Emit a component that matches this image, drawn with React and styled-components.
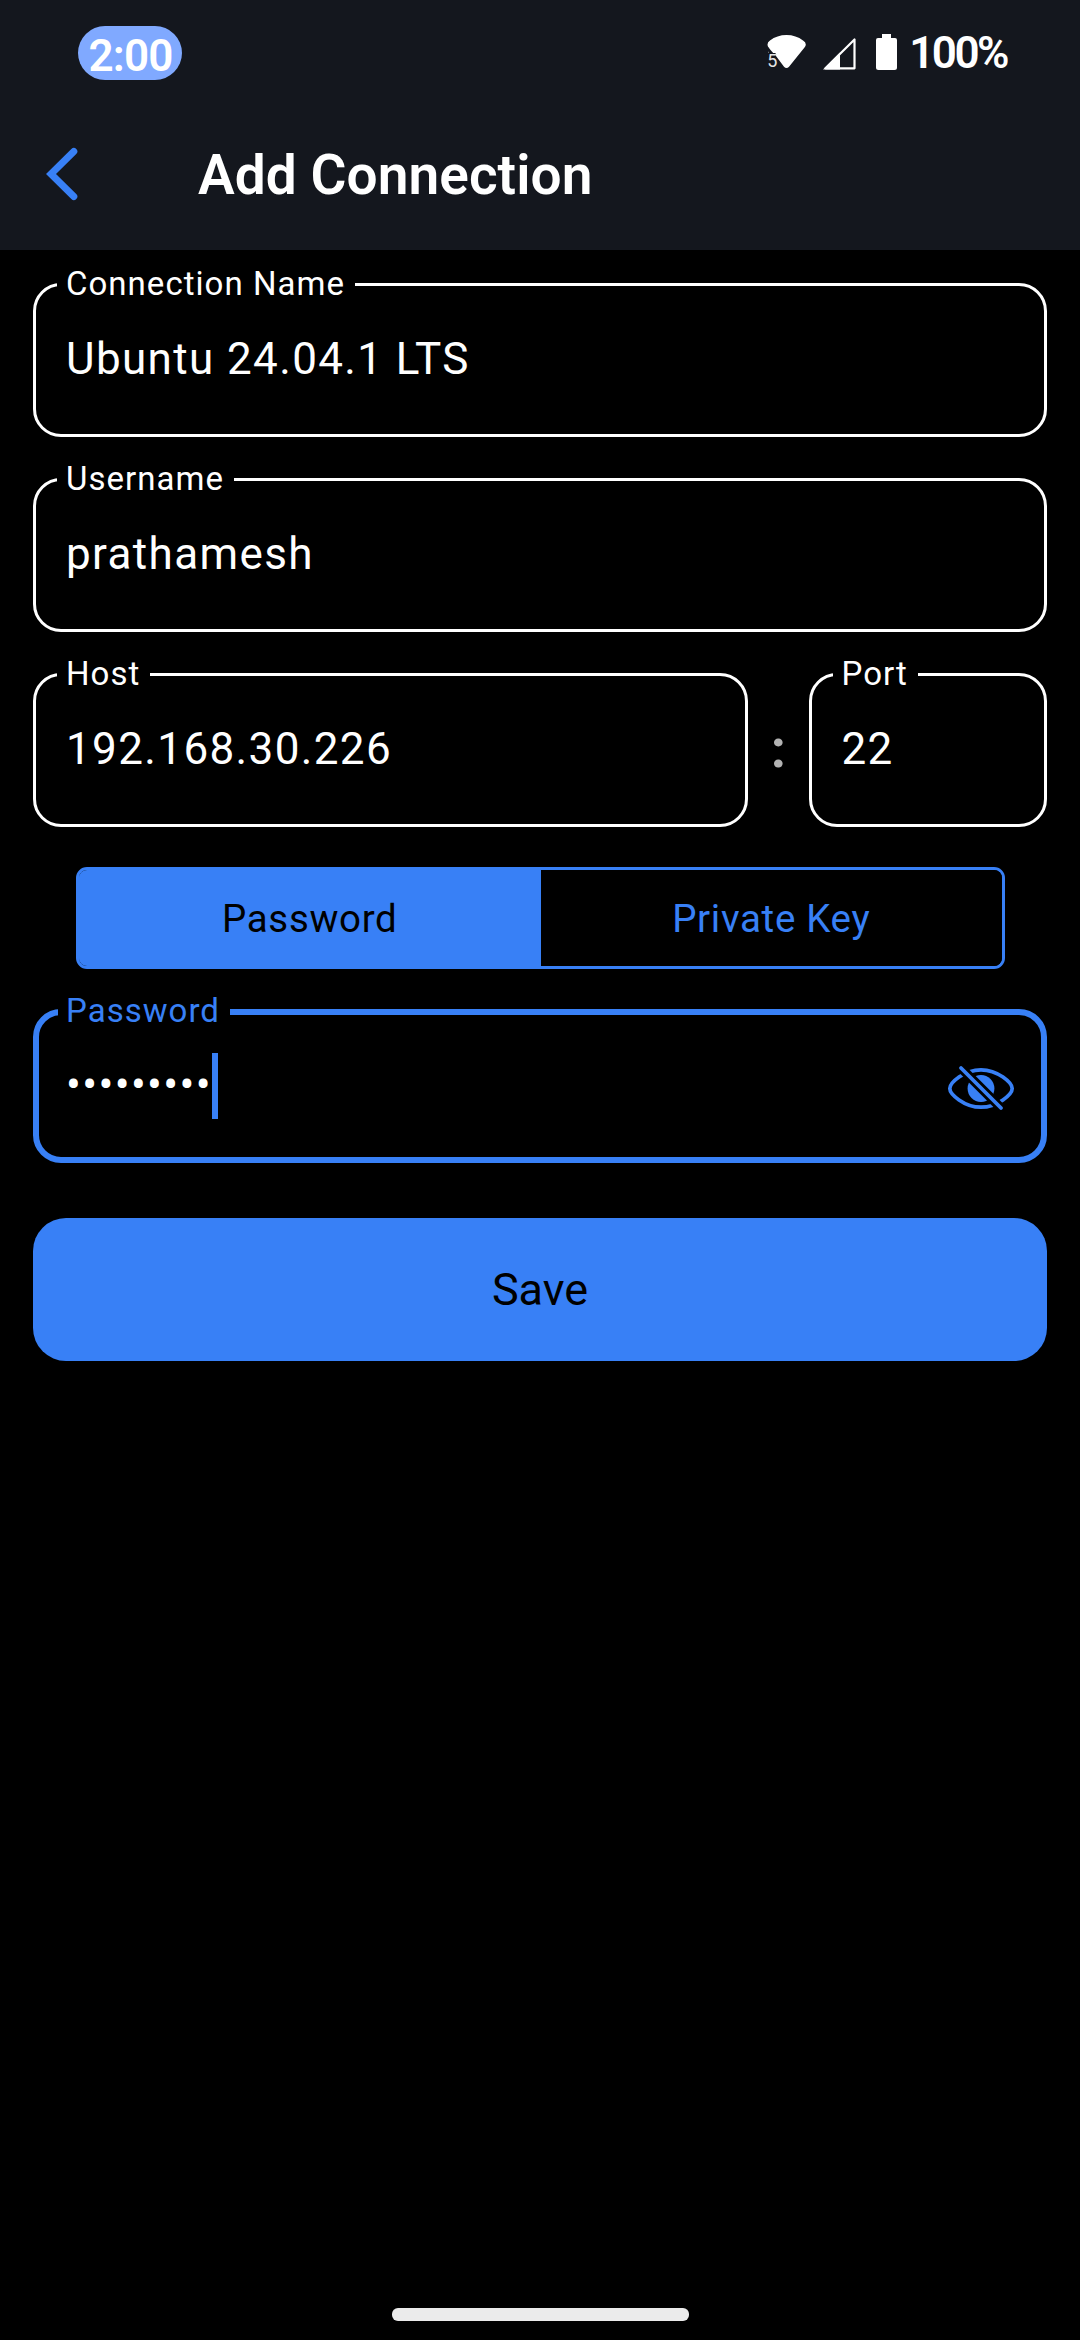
import React from "react";
import styled, { createGlobalStyle } from "styled-components";

const BLUE = "#3880f6";

const Global = createGlobalStyle`
  * { box-sizing: border-box; }
  html, body { margin: 0; padding: 0; background: #000; }
  body { font-family: Roboto, "Liberation Sans", sans-serif; color: #fff; }
`;

const Screen = styled.div`
  width: 1080px;
  height: 2340px;
  display: flex;
  flex-direction: column;
  background: #000;
  overflow: hidden;
`;

const StatusBar = styled.div`
  height: 96px;
  flex: none;
  display: flex;
  justify-content: space-between;
  align-items: flex-start;
  padding: 26px 73px 0 78px;
  background: #14171e;
`;

const TimePill = styled.div`
  width: 104px;
  height: 54px;
  border-radius: 27px;
  background: #80a9ff;
  display: flex;
  justify-content: center;
  padding: 5px 0 0 1px;
  font-size: 44px;
  line-height: 50px;
  font-weight: 600;
  letter-spacing: -0.8px;
`;

const StatusIcons = styled.div`
  display: flex;
  align-items: flex-start;
  padding-top: 8px;
`;

const WifiBox = styled.div`
  position: relative;
  width: 39px;
  height: 36px;
  margin-right: 17px;
`;

const Band = styled.span`
  position: absolute;
  left: 0;
  top: 17px;
  font-size: 18px;
  line-height: 20px;
  color: #e4e5e6;
`;

const Signal = styled.svg`
  margin: 3px 20px 0 0;
`;

const Battery = styled.svg`
  margin-right: 12px;
`;

const Percent = styled.span`
  font-size: 44px;
  line-height: 50px;
  margin-top: -6px;
  font-weight: 600;
  letter-spacing: -2.5px;
`;

const AppBar = styled.header`
  height: 154px;
  flex: none;
  display: flex;
  align-items: center;
  padding: 0 44px;
  background: #14171e;
`;

const BackIcon = styled.svg`
  flex: none;
  margin-right: 118px;
`;

const Title = styled.h1`
  margin: 3px 0 0;
  font-size: 55px;
  line-height: 64px;
  font-weight: 600;
  letter-spacing: 0.05px;
`;

const Form = styled.main`
  flex: 1;
  display: flex;
  flex-direction: column;
  padding: 14.75px 33px 0;
`;

const FieldBox = styled.fieldset`
  margin: 0 0 ${(p) => p.$gap ?? 23.25}px;
  padding: 0;
  min-width: 0;
  height: ${(p) => (p.$active ? 170.5 : 172)}px;
  width: ${(p) => (p.$width ? `${p.$width}px` : "100%")};
  flex: none;
  border: ${(p) => (p.$active ? 6 : 3)}px solid ${(p) => (p.$active ? BLUE : "#fff")};
  border-radius: 28px;
`;

const Label = styled.legend`
  margin-left: ${(p) => (p.$active ? 19 : 21)}px;
  padding: 0 10px 1px ${(p) => (p.$active ? 8 : 9)}px;
  font-size: 33px;
  line-height: 38px;
  letter-spacing: 1.03px;
  color: ${(p) => (p.$active ? BLUE : "#fff")};
`;

const Value = styled.div`
  display: flex;
  align-items: center;
  height: 52px;
  margin: ${(p) => (p.$active ? 27.8 : 28.8)}px 0 0 ${(p) => (p.$active ? 27 : 30)}px;
  font-size: 44px;
  line-height: 52px;
  letter-spacing: 1.375px;
  white-space: nowrap;
`;

const Caret = styled.span`
  width: 6px;
  height: 66px;
  margin: 2px 0 0 0;
  flex: none;
  background: ${BLUE};
`;

const EyeIcon = styled.svg`
  margin: 6px 24px 0 auto;
`;

const HostRow = styled.div`
  display: flex;
  justify-content: space-between;
  margin-bottom: 39.75px;
`;

const Colon = styled.span`
  align-self: center;
  margin-top: 16px;
  font-size: 54px;
  line-height: 60px;
  font-weight: 700;
  color: #b3b3b3;
`;

const Segments = styled.div`
  display: flex;
  height: 102px;
  margin: 0 42.5px 23.25px;
  flex: none;
  border: 3px solid ${BLUE};
  border-radius: 11px;
  overflow: hidden;
`;

const Segment = styled.div`
  flex: 1;
  display: flex;
  align-items: center;
  justify-content: center;
  border-left: 1px solid ${BLUE};
  font-size: 38.5px;
  letter-spacing: 0.69px;
  background: ${(p) => (p.$selected ? BLUE : "#000")};
  color: ${(p) => (p.$selected ? "#000" : BLUE)};
`;

const SaveButton = styled.button`
  height: 143px;
  flex: none;
  border: 0;
  padding: 0;
  border-radius: 33px;
  background: ${BLUE};
  color: #000;
  font: 400 45px/52px Roboto, "Liberation Sans", sans-serif;
`;

const HomeArea = styled.footer`
  display: flex;
  justify-content: center;
  padding-bottom: 19.5px;
`;

const HomeBar = styled.div`
  width: 297px;
  height: 12.5px;
  border-radius: 6px;
  background: #ebebeb;
`;

function Field({ label, value, width, gap }) {
  return (
    <FieldBox $width={width} $gap={gap}>
      <Label>{label}</Label>
      <Value>{value}</Value>
    </FieldBox>
  );
}

export default function App() {
  return (
    <Screen>
      <Global />
      <StatusBar>
        <TimePill>2:00</TimePill>
        <StatusIcons>
          <WifiBox>
            <svg width="39" height="36" viewBox="0 0 39 36">
              <path
                d="M0.5 10.5Q0.5 8 3 6.5Q10 1 19.5 1T36 6.5Q38.8 8 38.8 10.5Q38.8 12 37.5 13.5L22 32.7Q19.5 35.2 17 32.7L9 22V20.5H1L2.5 15L1.5 13.5Q0.5 12 0.5 10.5Z"
                fill="#fff"
              />
              <rect x="0" y="19" width="8.6" height="17" fill="#14171e" />
              <path d="M1 13L7 20H2Z" fill="#14171e" />
            </svg>
            <Band>5</Band>
          </WifiBox>
          <Signal width="33" height="33" viewBox="0 0 33 33">
            <path d="M2.5 31.3L31.5 2.5V31.3Z" fill="none" stroke="#fff" strokeWidth="2.2" strokeLinejoin="round" />
            <path d="M0 32.5L17 15.5V32.5Z" fill="#fff" />
          </Signal>
          <Battery width="21" height="36" viewBox="0 0 21 36">
            <path d="M6 0H15V4H19Q21 4 21 6V33.5Q21 36 18.5 36H2.5Q0 36 0 33.5V6Q0 4 2 4H6Z" fill="#fff" />
          </Battery>
          <Percent>100%</Percent>
        </StatusIcons>
      </StatusBar>

      <AppBar>
        <BackIcon width="36" height="56" viewBox="0 0 36 56">
          <path d="M29.8 6.5L7 29L29.8 51.5" fill="none" stroke={BLUE} strokeWidth="7" strokeLinecap="round" />
        </BackIcon>
        <Title>Add Connection</Title>
      </AppBar>

      <Form>
        <Field label="Connection Name" value="Ubuntu 24.04.1 LTS" />
        <Field label="Username" value="prathamesh" />
        <HostRow>
          <Field label="Host" value="192.168.30.226" width={715} gap={0} />
          <Colon>:</Colon>
          <Field label="Port" value="22" width={238.5} gap={0} />
        </HostRow>

        <Segments>
          <Segment $selected>Password</Segment>
          <Segment>Private Key</Segment>
        </Segments>

        <FieldBox $active $gap={55.25}>
          <Label $active>Password</Label>
          <Value $active>
            •••••••••
            <Caret />
            <EyeIcon width="72" height="50" viewBox="0 0 72 50">
              <mask id="slash-gap">
                <rect width="72" height="50" fill="#fff" />
                <path d="M12 1L62 51" stroke="#000" strokeWidth="9.4" />
              </mask>
              <g mask="url(#slash-gap)">
                <path
                  d="M4.8 25.5C4.8 20 19 6.8 36 6.8S67.2 20 67.2 25.5S53 44.2 36 44.2S4.8 31 4.8 25.5Z"
                  fill="none"
                  stroke={BLUE}
                  strokeWidth="3.7"
                />
                <circle cx="36" cy="25.5" r="13.4" fill={BLUE} />
              </g>
              <path d="M16 5L56 45" stroke={BLUE} strokeWidth="3.8" strokeLinecap="round" />
            </EyeIcon>
          </Value>
        </FieldBox>

        <SaveButton>Save</SaveButton>
      </Form>

      <HomeArea>
        <HomeBar />
      </HomeArea>
    </Screen>
  );
}
